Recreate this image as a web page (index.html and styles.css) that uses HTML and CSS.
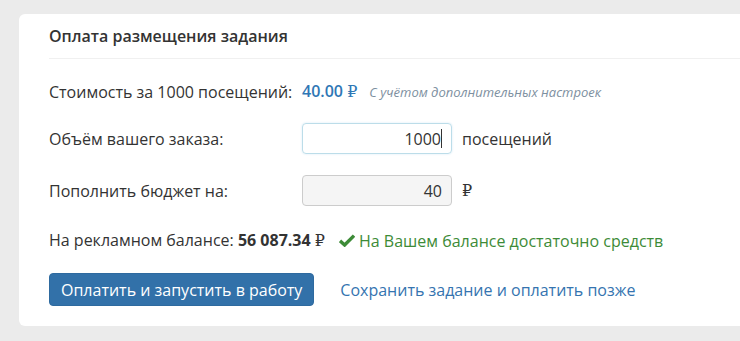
FILE: index.html
```html
<!DOCTYPE html>
<html lang="ru">
<head>
    <meta charset="UTF-8">
    <title>Оплата размещения задания</title>
    <link rel="stylesheet" href="styles.css">
</head>
<body>
    <div class="card">
        <div class="card-header">Оплата размещения задания</div>

        <div class="row row-price">
            <span class="label">Стоимость за 1000 посещений:</span>
            <span class="price">40.00 <span class="rub">₽</span></span>
            <span class="hint">С учётом дополнительных настроек</span>
        </div>

        <div class="row">
            <span class="label">Объём вашего заказа:</span>
            <div class="field field-focus">1000<span class="caret"></span></div>
            <span class="unit">посещений</span>
        </div>

        <div class="row">
            <span class="label">Пополнить бюджет на:</span>
            <div class="field field-readonly">40</div>
            <span class="unit rub">₽</span>
        </div>

        <div class="row row-balance">
            <span>На рекламном балансе: <b>56 087.34 <span class="rub">₽</span></b></span>
            <span class="ok">
                <svg width="16" height="13" viewBox="0 0 16 13"><path d="M1 6.8 L5.6 11 L15 1.6" fill="none" stroke="#3d8b37" stroke-width="3.4"/></svg>
                На Вашем балансе достаточно средств
            </span>
        </div>

        <div class="actions">
            <button class="btn">Оплатить и запустить в работу</button>
            <a href="#" class="link">Сохранить задание и оплатить позже</a>
        </div>
    </div>
</body>
</html>
```

FILE: styles.css
```css
body {
    margin: 0;
    background-color: #ebebeb;
    font-family: "Open Sans", Arial, sans-serif;
    font-size: 16px;
    color: #333;
    overflow: hidden;
}

.card {
    background-color: white;
    border-radius: 6px 0 0 6px;
    margin: 14px 0 0 19px;
    padding: 0 0 20px 30px;
}

.card-header {
    font-weight: 600;
    line-height: 20px;
    padding: 12px 0 12px;
    border-bottom: 1px solid #f0f0f0;
}

.row {
    display: flex;
    align-items: center;
    margin-top: 21px;
    line-height: 20px;
}

.row-price {
    margin-top: 22px;
}

.label {
    width: 253px;
    flex-shrink: 0;
}

.price {
    color: #2f77b5;
    font-weight: 600;
}

.hint {
    margin-left: 12px;
    font-size: 13px;
    font-style: italic;
    color: #7d8fa0;
}

.field {
    width: 150px;
    height: 31px;
    box-sizing: border-box;
    border: 1px solid #ccc;
    border-radius: 4px;
    padding: 0 9px;
    display: flex;
    align-items: center;
    justify-content: flex-end;
}

.field-focus {
    border-color: #bcdde9;
    box-shadow: 0 0 2px rgba(102, 175, 233, 0.3);
}

.field-readonly {
    background-color: #f5f5f5;
}

.caret {
    display: inline-block;
    width: 1px;
    height: 19px;
    background-color: #333;
}

.unit {
    margin-left: 10px;
}

.rub {
    font-family: "DejaVu Serif", serif;
    font-weight: normal;
    font-size: 16px;
}

.row-balance {
    margin-top: 24px;
}

.ok {
    color: #3d8b37;
    margin-left: 14px;
    display: flex;
    align-items: center;
    gap: 4px;
}

.actions {
    display: flex;
    align-items: center;
    gap: 26px;
    margin-top: 22px;
}

.btn {
    background-color: #3271a9;
    color: white;
    border: 1px solid #2e6a9f;
    border-radius: 4px;
    height: 33px;
    padding: 0 11px;
    font-family: inherit;
    font-size: 16px;
    cursor: pointer;
}

.link {
    color: #3574b0;
    text-decoration: none;
}
```
